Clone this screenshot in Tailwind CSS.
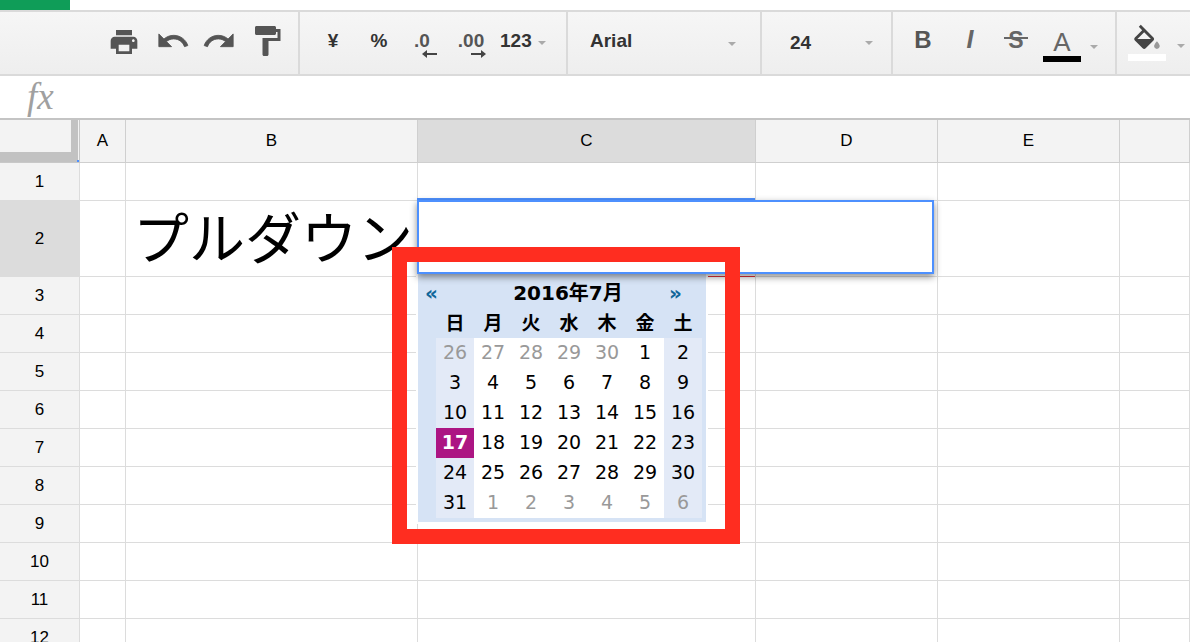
<!DOCTYPE html>
<html lang="ja"><head><meta charset="utf-8"><script src="https://cdn.jsdelivr.net/npm/@tailwindcss/browser@4"></script></head>
<body class="m-0 bg-white">
<div class="relative w-[1190px] h-[642px] overflow-hidden bg-white font-['Liberation_Sans','Noto_Sans_CJK_JP',sans-serif] text-black">
  <div class="h-[10px] bg-white"><div class="w-[70px] h-[10px] bg-[#0f9d58]"></div></div>
  <!-- toolbar -->
  <div class="flex h-[66px] border-y-2 border-[#dadada] bg-gradient-to-b from-[#f6f6f6] to-[#eeeeee] text-[#333] font-bold">
    <div class="flex items-center w-[300px] pl-[100px] border-r-2 border-[#dadada] text-[#555] pb-[2px]">
      <div class="w-[48px] flex justify-center"><svg class="w-[32px] h-[32px]" viewBox="0 0 24 24" fill="#555"><path d="M19 8H5c-1.66 0-3 1.34-3 3v6h4v4h12v-4h4v-6c0-1.66-1.34-3-3-3zm-3 11H8v-5h8v5zm3-7c-.55 0-1-.45-1-1s.45-1 1-1 1 .45 1 1-.45 1-1 1zm-1-9H6v4h12V3z"/></svg></div>
      <div class="w-[48px] flex justify-center mt-[-2px] ml-[1px]"><svg class="w-[34px] h-[34px]" viewBox="0 0 24 24" fill="#555" stroke="#555" stroke-width="0.6"><path d="M12.5 8c-2.65 0-5.05.99-6.9 2.6L2 7v9h9l-3.62-3.62c1.39-1.16 3.16-1.88 5.12-1.88 3.54 0 6.55 2.31 7.6 5.5l2.37-.78C21.08 11.03 17.15 8 12.5 8z"/></svg></div>
      <div class="w-[48px] flex justify-center mt-[-2px] -ml-[2px]"><svg class="w-[34px] h-[34px]" viewBox="0 0 24 24" fill="#555" stroke="#555" stroke-width="0.6"><path d="M18.4 10.6C16.55 8.99 14.15 8 11.5 8c-4.65 0-8.58 3.03-9.96 7.22L3.9 16c1.05-3.19 4.05-5.5 7.6-5.5 1.95 0 3.73.72 5.12 1.88L13 16h9V7l-3.6 3.6z"/></svg></div>
      <div class="w-[48px] flex justify-center"><svg class="w-[36px] h-[36px] mt-[-2px]" viewBox="0 0 24 24" fill="#555"><path d="M18 4V3c0-.55-.45-1-1-1H5c-.55 0-1 .45-1 1v4c0 .55.45 1 1 1h12c.55 0 1-.45 1-1V6h1v4H9v11c0 .55.45 1 1 1h2c.55 0 1-.45 1-1v-9h8V4h-3z"/></svg></div>
    </div>
    <div class="flex items-center w-[268px] pl-[10px] border-r-2 border-[#dadada] text-[19px] pb-[3px]">
      <div class="w-[46px] text-center">¥</div>
      <div class="w-[46px] text-center">%</div>
      <div class="w-[48px] flex flex-col items-center text-[#555] pt-[6px]">
        <span class="leading-[18px] -ml-[8px]">.0</span>
        <svg class="w-[16px] h-[8px] ml-[8px]" viewBox="0 0 16 8" fill="#444"><path d="M0 4l5-4v3h10v2H5v3z"/></svg>
      </div>
      <div class="w-[44px] flex flex-col items-center text-[#555] pt-[6px]">
        <span class="leading-[18px] -ml-[2px]">.00</span>
        <svg class="w-[16px] h-[8px] ml-[12px]" viewBox="0 0 16 8" fill="#444"><path d="M16 4l-5-4v3H1v2h10v3z"/></svg>
      </div>
      <div class="flex items-center pl-[6px]"><span>123</span><span class="ml-[6px] mt-[3px] w-0 h-0 border-x-[4px] border-t-[4px] border-x-transparent border-t-[#aaa]"></span></div>
    </div>
    <div class="flex items-center justify-between w-[194px] pl-[22px] pr-[24px] border-r-2 border-[#dadada] text-[19px] pb-[3px]"><span>Arial</span><span class="mt-[5px] w-0 h-0 border-x-[4px] border-t-[4px] border-x-transparent border-t-[#aaa]"></span></div>
    <div class="flex items-center justify-between w-[131px] pl-[28px] pr-[18px] border-r-2 border-[#dadada] text-[19px]"><span>24</span><span class="w-0 h-0 border-x-[4px] border-t-[4px] border-x-transparent border-t-[#aaa]"></span></div>
    <div class="flex items-center w-[224px] pl-[20px] border-r-2 border-[#dadada] text-[#666] pb-[6px]">
      <div class="w-[20px] text-center text-[24px] text-[#555]">B</div>
      <div class="w-[26px] ml-[24px] text-center text-[25px] italic text-[#666]">I</div>
      <div class="relative w-[24px] ml-[21px] text-center text-[23px] text-[#666]">S<span class="absolute left-0 right-0 top-[14px] h-[2px] bg-[#666]"></span></div>
      <div class="flex flex-col items-center w-[38px] ml-[15px] pt-[10px]"><span class="text-[26px] leading-[26px] font-normal">A</span><span class="w-[38px] h-[6px] mt-[1px] bg-black"></span></div>
      <span class="ml-[9px] mt-[14px] w-0 h-0 border-x-[4px] border-t-[4px] border-x-transparent border-t-[#aaa]"></span>
    </div>
    <div class="flex items-center pl-[11px]">
      <div class="flex flex-col items-center">
        <svg class="w-[34px] h-[30px] mt-[-1px]" viewBox="0 0 24 20" fill="#444"><path d="M16.56 8.94L7.62 0 6.21 1.41l2.38 2.38-5.15 5.15c-.59.59-.59 1.54 0 2.12l5.5 5.5c.29.29.68.44 1.06.44s.77-.15 1.06-.44l5.5-5.5c.59-.58.59-1.53 0-2.12zM5.21 10L10 5.21 14.79 10H5.21z"/><path fill="#999" d="M19 11.5s-2 2.17-2 3.5c0 1.1.9 2 2 2s2-.9 2-2c0-1.33-2-3.5-2-3.5z"/></svg>
        <span class="w-[38px] h-[7px] bg-white"></span>
      </div>
      <span class="ml-[11px] mt-[5px] w-0 h-0 border-x-[4px] border-t-[4px] border-x-transparent border-t-[#aaa]"></span>
    </div>
  </div>
  <!-- formula bar -->
  <div class="h-[44px] border-b-2 border-[#c4c4c4] pl-[27px] pt-[2px] bg-white"><span class="font-['Liberation_Serif',serif] italic text-[37px] leading-[38px] text-[#a0a0a0]">fx</span></div>
  <!-- grid -->
  <div class="grid grid-cols-[80px_46px_292px_338px_182px_182px_1fr] grid-rows-[43px_38px_76px_38px_38px_38px_38px_38px_38px_38px_38px_38px_38px] text-[17px] [&>div]:border-r [&>div]:border-b [&>div]:border-[#dcdcdc] [&>div]:flex [&>div]:items-center [&>div]:justify-center">
    <div class="relative bg-[#f3f3f3] !border-[#c8c8c8]"><span class="absolute left-0 bottom-0 w-[78px] h-[10px] bg-[#c2c2c2]"></span><span class="absolute right-[1px] top-0 w-[7px] h-full bg-[#c2c2c2]"></span><span class="absolute right-0 bottom-0 w-[2px] h-[2px] bg-[#4d90fe]"></span></div>
    <div class="bg-[#f3f3f3] !border-[#cfcfcf]">A</div><div class="bg-[#f3f3f3] !border-[#cfcfcf]">B</div><div class="bg-[#dcdcdc] !border-[#cfcfcf]">C</div><div class="bg-[#f3f3f3] !border-[#cfcfcf]">D</div><div class="bg-[#f3f3f3] !border-[#cfcfcf]">E</div><div class="bg-[#f3f3f3] !border-[#cfcfcf]"></div>

    <div class="bg-[#f3f3f3]">1</div><div></div><div></div><div></div><div></div><div></div><div></div>
    <div class="bg-[#dcdcdc]">2</div><div></div><div class="!justify-start pl-[7px] pb-[8px] text-[56px] leading-none font-['Noto_Sans_CJK_JP',sans-serif] whitespace-nowrap overflow-visible">プルダウン</div><div></div><div></div><div></div><div></div>
    <div class="bg-[#f3f3f3]">3</div><div></div><div></div><div></div><div></div><div></div><div></div>
    <div class="bg-[#f3f3f3]">4</div><div></div><div></div><div></div><div></div><div></div><div></div>
    <div class="bg-[#f3f3f3]">5</div><div></div><div></div><div></div><div></div><div></div><div></div>
    <div class="bg-[#f3f3f3]">6</div><div></div><div></div><div></div><div></div><div></div><div></div>
    <div class="bg-[#f3f3f3]">7</div><div></div><div></div><div></div><div></div><div></div><div></div>
    <div class="bg-[#f3f3f3]">8</div><div></div><div></div><div></div><div></div><div></div><div></div>
    <div class="bg-[#f3f3f3]">9</div><div></div><div></div><div></div><div></div><div></div><div></div>
    <div class="bg-[#f3f3f3]">10</div><div></div><div></div><div></div><div></div><div></div><div></div>
    <div class="bg-[#f3f3f3]">11</div><div></div><div></div><div></div><div></div><div></div><div></div>
    <div class="bg-[#f3f3f3]">12</div><div></div><div></div><div></div><div></div><div></div><div></div>
  </div>

  <!-- selected cell remnants -->
  <div class="absolute left-[417px] top-[198px] w-[338px] h-[3px] bg-[#4d90fe]"></div>
  <div class="absolute left-[708px] top-[276px] w-[47px] h-[1px] bg-[#e0323c]"></div>

  <!-- date picker -->
  <div class="absolute left-[416px] top-[274px] w-[292px] h-[250px] border-x-2 border-b-2 border-white bg-[#d6e3f5] font-['DejaVu_Sans','Noto_Sans_CJK_JP',sans-serif] text-[19px]">
    <div class="relative flex justify-center items-center h-[35px] font-bold text-[20px] leading-none pt-[2px] pl-[12px]">
      <span class="absolute left-[7px] top-[9px] text-[#116699] text-[20px]">«</span>
      <span>2016年7月</span>
      <span class="absolute right-[24px] top-[9px] text-[#116699] text-[20px]">»</span>
    </div>
    <div class="grid grid-cols-[repeat(7,38px)] pl-[18px] h-[29px] pb-[2px] items-center text-center font-bold">
      <span>日</span><span>月</span><span>火</span><span>水</span><span>木</span><span>金</span><span>土</span>
    </div>
    <div class="grid grid-cols-[repeat(7,38px)] grid-rows-[repeat(6,30px)] ml-[18px] text-center leading-[28px] [&>span]:bg-white">
      <span class="!bg-[#e3eaf7] text-[#999]">26</span><span class="text-[#999]">27</span><span class="text-[#999]">28</span><span class="text-[#999]">29</span><span class="text-[#999]">30</span><span>1</span><span class="!bg-[#e3eaf7]">2</span>
      <span class="!bg-[#e3eaf7]">3</span><span>4</span><span>5</span><span>6</span><span>7</span><span>8</span><span class="!bg-[#e3eaf7]">9</span>
      <span class="!bg-[#e3eaf7]">10</span><span>11</span><span>12</span><span>13</span><span>14</span><span>15</span><span class="!bg-[#e3eaf7]">16</span>
      <span class="!bg-[#ac1583] text-white font-bold">17</span><span>18</span><span>19</span><span>20</span><span>21</span><span>22</span><span class="!bg-[#e3eaf7]">23</span>
      <span class="!bg-[#e3eaf7]">24</span><span>25</span><span>26</span><span>27</span><span>28</span><span>29</span><span class="!bg-[#e3eaf7]">30</span>
      <span class="!bg-[#e3eaf7]">31</span><span class="text-[#999]">1</span><span class="text-[#999]">2</span><span class="text-[#999]">3</span><span class="text-[#999]">4</span><span class="text-[#999]">5</span><span class="!bg-[#e3eaf7] text-[#999]">6</span>
    </div>
  </div>
  <!-- cell editor -->
  <div class="absolute left-[417px] top-[200px] w-[517px] h-[74px] border-2 border-[#4d90fe] bg-white shadow-[0_3px_7px_rgba(0,0,0,0.45)]"></div>
  <!-- annotation frame -->
  <div class="absolute left-[392px] top-[247px] w-[348px] h-[297px] border-[15px] border-[#ff2d20]"></div>
</div>
</body></html>
